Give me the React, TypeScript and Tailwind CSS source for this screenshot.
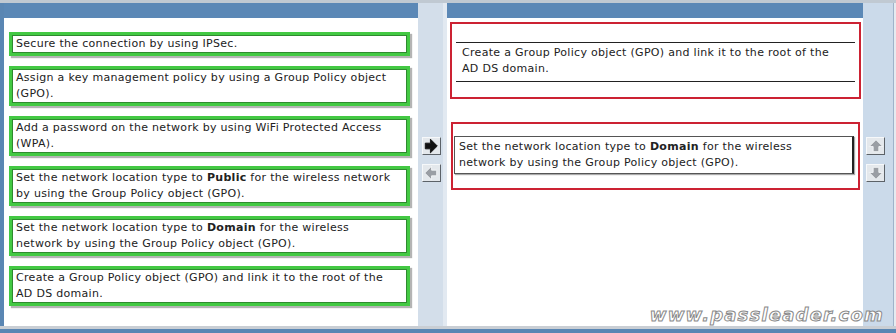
import React from "react";

const font = { fontFamily: '"DejaVu Sans", Verdana, sans-serif' };

const leftItems: React.ReactNode[] = [
  <>Secure the connection by using IPSec.</>,
  <>
    Assign a key management policy by using a Group Policy object
    <br />
    (GPO).
  </>,
  <>
    Add a password on the network by using WiFi Protected Access
    <br />
    (WPA).
  </>,
  <>
    Set the network location type to <b>Public</b> for the wireless network
    <br />
    by using the Group Policy object (GPO).
  </>,
  <>
    Set the network location type to <b>Domain</b> for the wireless
    <br />
    network by using the Group Policy object (GPO).
  </>,
  <>
    Create a Group Policy object (GPO) and link it to the root of the
    <br />
    AD DS domain.
  </>,
];

const Arrow = ({ dir, dark }: { dir: "right" | "left" | "up" | "down"; dark?: boolean }) => {
  const rot = { right: 0, left: 180, up: 270, down: 90 }[dir];
  return (
    <svg width="16" height="16" viewBox="0 0 14 14">
      <g transform={`rotate(${rot} 7 7)`}>
        <polygon
          points="2,4.5 6.5,4.5 6.5,1 12.5,7 6.5,13 6.5,9.5 2,9.5"
          fill={dark ? "#111" : "#9a9ea4"}
          stroke={dark ? "#111" : "#f4f6f8"}
          strokeWidth="0.8"
        />
      </g>
    </svg>
  );
};

const Btn = ({ dir, dark }: { dir: "right" | "left" | "up" | "down"; dark?: boolean }) => (
  <div className="w-[19px] h-[18px] flex items-center justify-center bg-[#e4e8ec] border border-t-[#f6f8fa] border-l-[#f6f8fa] border-r-[#5c6268] border-b-[#5c6268]">
    <Arrow dir={dir} dark={dark} />
  </div>
);

export default function App() {
  return (
    <div
      className="w-[896px] h-[333px] flex flex-col bg-[#c3ccd6] text-[#222] overflow-hidden"
      style={font}
    >
      <div className="h-[3px] bg-[#c0c9d2]" />
      <div className="flex h-[323px]">
        {/* left panel */}
        <div className="w-[418px] flex flex-col border-l-4 border-[#5a86b3]">
          <div className="h-[15px] bg-[#5b88b6]" />
          <div className="flex-1 bg-white pt-[14px] pl-[5px] pr-[8px] flex flex-col gap-[10px]">
            {leftItems.map((it, i) => (
              <div
                key={i}
                className="border-[3px] border-[#43c943] bg-white px-[4px] py-[1px] text-[11px] tracking-[0.3px] leading-[16px] shadow-[inset_0_0_0_1px_#2f8a2f,2px_2px_1px_#b4b4b4]"
              >
                {it}
              </div>
            ))}
          </div>
        </div>

        {/* middle column */}
        <div className="w-[29px] bg-[#d3deea] flex flex-col items-center pt-[134px] gap-[9px] pl-[2px] pr-[1px] border-r-4 border-[#e2e9f1]">
          <Btn dir="right" dark />
          <Btn dir="left" />
        </div>

        {/* right panel */}
        <div className="w-[416px] flex flex-col">
          <div className="h-[15px] bg-[#5b88b6]" />
          <div className="relative flex-1 bg-white pt-[4px] pl-[3px] pr-[2px] flex flex-col text-[11px] tracking-[0.3px] leading-[16px]">
            <div className="h-[77px] border-2 border-[#cc2233] pt-[18px] px-[4px]">
              <div className="border-t border-b border-[#222] pt-[2px] pb-[4px] pl-[6px]">
                Create a Group Policy object (GPO) and link it to the root of the
                <br />
                AD DS domain.
              </div>
            </div>
            <div className="mt-[23px] mx-[1px] h-[68px] border-2 border-[#cc2233] pt-[12px] pl-[1px] pr-[4px]">
              <div className="border border-[#555] border-r-2 border-r-[#222] pt-[2px] pb-[2px] pl-[4px] shadow-[1px_1px_1px_#aaa]">
                Set the network location type to <b>Domain</b> for the wireless
                <br />
                network by using the Group Policy object (GPO).
              </div>
            </div>
            <div
              className="absolute right-[-21px] bottom-[0px] text-[18px] leading-[22px] font-bold italic tracking-[1.2px] text-white"
              style={{ WebkitTextStroke: "1px #8a8a8a", fontFamily: '"DejaVu Sans", sans-serif' }}
            >
              www.passleader.com
            </div>
          </div>
        </div>

        {/* right column */}
        <div className="w-[30px] bg-[#cbdaea] flex flex-col items-center pt-[134px] gap-[9px] pr-[5px]">
          <Btn dir="up" />
          <Btn dir="down" />
        </div>
        <div className="w-[1px] bg-[#9fb4ca]" />
        <div className="w-[2px] bg-[#e6ebf0]" />
      </div>
      <div className="h-[3px] bg-[#c9ced4]" />
      <div className="h-[4px] bg-[#5a86b3]" />
    </div>
  );
}
